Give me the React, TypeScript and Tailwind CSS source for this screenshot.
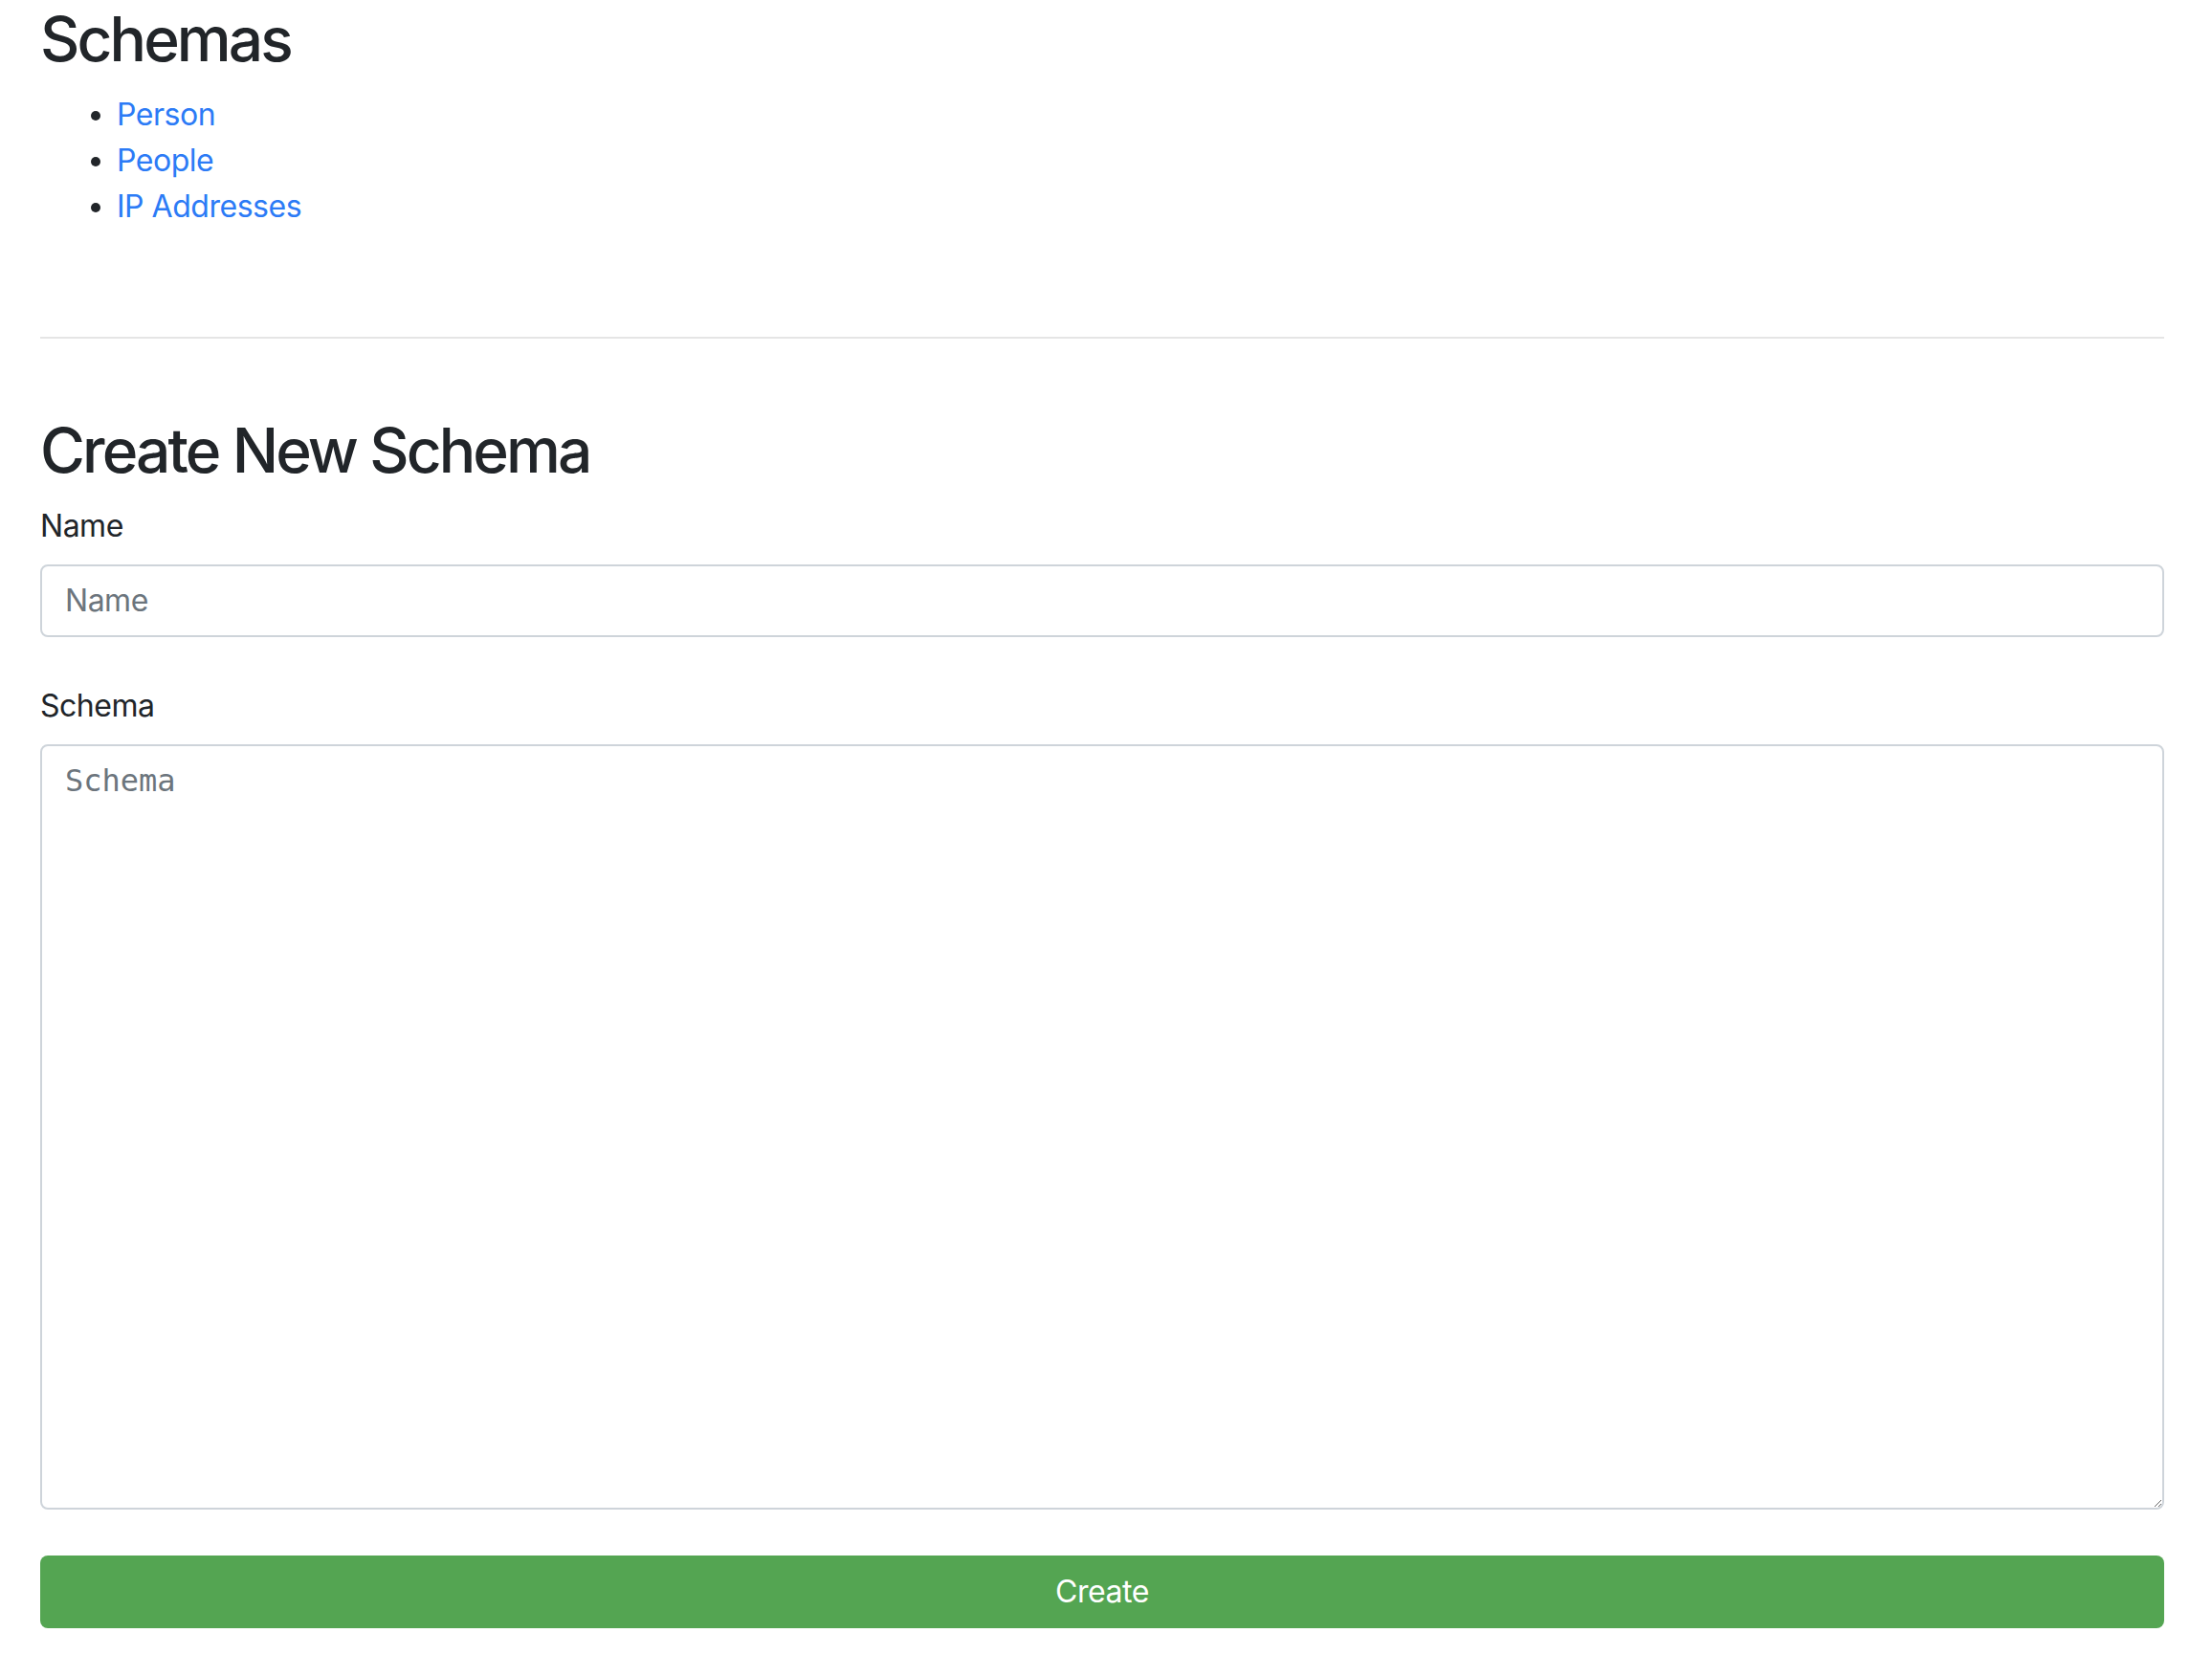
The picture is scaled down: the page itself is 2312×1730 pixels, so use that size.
import React from "react";

const schemas = ["Person", "People", "IP Addresses"];

const App: React.FC = () => {
  return (
    <div className="min-h-screen bg-white pl-[42px] pr-[50px] pt-[3px] font-['Inter','Liberation_Sans',sans-serif] text-[32px] leading-[48px] tracking-[-0.015em] text-[#212529]">
      <h2 className="mb-4 text-[64px] font-medium leading-[1.2] tracking-[-0.045em]">Schemas</h2>
      <ul className="list-disc pl-[80px]">
        {schemas.map((name) => (
          <li key={name}>
            <a href="#" className="text-[#2c7bf6] no-underline">
              {name}
            </a>
          </li>
        ))}
      </ul>

      <hr className="mt-[112px] border-0 border-t-2 border-[#e5e5e5]" />

      <h2 className="mt-[79px] mb-4 text-[64px] font-medium leading-[1.2] tracking-[-0.045em]">Create New Schema</h2>

      <form className="flex flex-col" onSubmit={(e) => e.preventDefault()}>
        <div className="mb-12 flex flex-col">
          <label htmlFor="name" className="mb-4">
            Name
          </label>
          <input
            id="name"
            type="text"
            placeholder="Name"
            className="h-[76px] w-full rounded-lg border-2 border-[#ced4da] px-6 py-3 text-[32px] leading-[48px] tracking-[-0.015em] text-[#495057] placeholder:text-[#6c757d] outline-none"
          />
        </div>

        <div className="mb-12 flex flex-col">
          <label htmlFor="schema" className="mb-4">
            Schema
          </label>
          <textarea
            id="schema"
            placeholder="Schema"
            className="h-[800px] w-full rounded-lg border-2 border-[#ced4da] px-6 py-3 font-['DejaVu_Sans_Mono','Liberation_Mono',monospace] text-[32px] leading-[48px] tracking-normal text-[#495057] placeholder:text-[#6c757d] outline-none"
          />
        </div>

        <button
          type="submit"
          className="h-[76px] w-full rounded-lg bg-[#54a552] text-[32px] tracking-[-0.015em] text-white"
        >
          Create
        </button>
      </form>
    </div>
  );
};

export default App;
